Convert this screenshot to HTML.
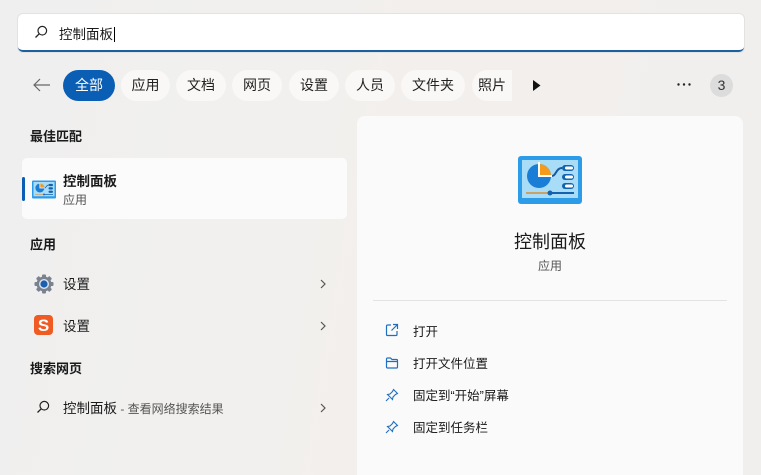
<!DOCTYPE html>
<html><head><meta charset="utf-8"><style>
*{margin:0;padding:0;box-sizing:border-box}
html,body{width:761px;height:475px;overflow:hidden}
body{background:linear-gradient(100deg,#efefef 0%,#f2f0ee 40%,#f3efec 50%,#f0efee 100%);font-family:"Liberation Sans","Noto Sans CJK SC",sans-serif;color:#1a1a1a;position:relative}
.a{position:absolute}
.search{left:18px;top:14px;width:726px;height:38px;background:#fff;border-radius:5px;border-bottom:2px solid #1e5fa0;box-shadow:0 0 0 1px #e2e2e2}
.chip{position:absolute;top:70px;height:31px;border-radius:16px;background:#f9f8f7;font-size:14px;line-height:31px;text-align:center;color:#222}
.chip.on{background:#0a5fb4;color:#fff}
.h{font-size:13px;font-weight:bold;color:#1a1a1a}
.t{font-size:13.5px;color:#1a1a1a}
.act{font-size:12.5px;color:#1a1a1a}
</style></head><body>
<div class="a search"></div>
<svg class="a" style="left:34px;top:25px" width="14" height="14" viewBox="0 0 14 14"><circle cx="8.3" cy="5.7" r="4.3" fill="none" stroke="#222" stroke-width="1.2"/><path d="M5.2 8.8L1.5 12.5" stroke="#222" stroke-width="1.3"/></svg>
<div class="a" style="left:59px;top:23px;font-size:13.5px">控制面板<span style="border-left:1px solid #000;margin-left:1px"></span></div>

<svg class="a" style="left:32px;top:77px" width="20" height="16" viewBox="0 0 20 16"><path d="M18 8H2M8 2L2 8l6 6" fill="none" stroke="#666" stroke-width="1.2"/></svg>
<div class="chip on" style="left:63px;width:52px">全部</div>
<div class="chip" style="left:121px;width:49px">应用</div>
<div class="chip" style="left:176px;width:50px">文档</div>
<div class="chip" style="left:232px;width:50px">网页</div>
<div class="chip" style="left:289px;width:50px">设置</div>
<div class="chip" style="left:345px;width:50px">人员</div>
<div class="chip" style="left:401px;width:64px">文件夹</div>
<div class="chip" style="left:472px;width:40px;border-radius:16px 0 0 16px">照片</div>
<svg class="a" style="left:532px;top:80px" width="9" height="11"><path d="M1 0L8.5 5.5L1 11Z" fill="#111"/></svg>
<svg class="a" style="left:677px;top:83px" width="14" height="3"><circle cx="1.5" cy="1.5" r="1.2" fill="#222"/><circle cx="7" cy="1.5" r="1.2" fill="#222"/><circle cx="12.5" cy="1.5" r="1.2" fill="#222"/></svg>
<div class="a" style="left:710px;top:74px;width:23px;height:23px;border-radius:50%;background:#dcdcdc;font-size:14px;text-align:center;line-height:23px;color:#333">3</div>

<div class="a h" style="left:30px;top:126px">最佳匹配</div>
<div class="a" style="left:22px;top:158px;width:325px;height:61px;background:#fbfbfb;border-radius:5px"></div>
<div class="a" style="left:22px;top:177px;width:3px;height:24px;background:#0a5fb4;border-radius:2px"></div>
<svg class="a" style="left:32px;top:180px" width="24" height="19" viewBox="0 0 64 48"><rect x="0" y="0" width="64" height="48" rx="3" fill="#2c9be8"/><rect x="4" y="4" width="56" height="38" fill="#a9dcf6"/><circle cx="21" cy="20" r="12" fill="#1a7ed6"/><path d="M21 8A12 12 0 0 1 33 20H21Z" fill="#f49b1c"/><path d="M21 6v14h14" fill="none" stroke="#fff" stroke-width="2"/><path d="M34 20c4 0 4-8 10-8" stroke="#145a9e" stroke-width="2" fill="none"/><rect x="44" y="9" width="12" height="6" rx="3" fill="#1262b0"/><rect x="44" y="18" width="12" height="6" rx="3" fill="#1262b0"/><rect x="44" y="27" width="12" height="6" rx="3" fill="#1262b0"/><path d="M8 37h22" stroke="#c9a26a" stroke-width="2"/><path d="M34 37h22" stroke="#1262b0" stroke-width="2"/><circle cx="32" cy="37" r="2.5" fill="#1262b0"/></svg>
<div class="a" style="left:63px;top:170px;font-size:13.5px;font-weight:bold">控制面板</div>
<div class="a" style="left:63px;top:191px;font-size:12px;color:#555">应用</div>

<div class="a h" style="left:30px;top:234px">应用</div>
<svg class="a" style="left:34px;top:274px" width="20" height="20" viewBox="0 0 20 20"><g fill="#7a8290"><circle cx="10" cy="10" r="7.5"/><rect x="8" y="0.5" width="4" height="19" rx="1"/><rect x="0.5" y="8" width="19" height="4" rx="1"/><rect x="8" y="0.5" width="4" height="19" rx="1" transform="rotate(45 10 10)"/><rect x="8" y="0.5" width="4" height="19" rx="1" transform="rotate(-45 10 10)"/></g><circle cx="10" cy="10" r="5" fill="#dfe4ea"/><circle cx="10" cy="10" r="3.6" fill="#1a5fb0"/></svg>
<div class="a t" style="left:63px;top:273px">设置</div>
<svg class="a" style="left:320px;top:279px" width="6" height="10"><path d="M1 1l4 4-4 4" fill="none" stroke="#555" stroke-width="1.2"/></svg>
<svg class="a" style="left:34px;top:315px" width="19" height="20" viewBox="0 0 19 20"><rect x="0" y="0" width="19" height="20" rx="4" fill="#f05a23"/><text x="9.5" y="16" font-size="17" font-weight="bold" fill="#fff" text-anchor="middle" font-family="Liberation Sans">S</text></svg>
<div class="a t" style="left:63px;top:315px">设置</div>
<svg class="a" style="left:320px;top:321px" width="6" height="10"><path d="M1 1l4 4-4 4" fill="none" stroke="#555" stroke-width="1.2"/></svg>

<div class="a h" style="left:30px;top:358px">搜索网页</div>
<svg class="a" style="left:36px;top:400px" width="14" height="14" viewBox="0 0 14 14"><circle cx="8.3" cy="5.7" r="4.3" fill="none" stroke="#222" stroke-width="1.2"/><path d="M5.2 8.8L1.5 12.5" stroke="#222" stroke-width="1.3"/></svg>
<div class="a t" style="left:63px;top:397px">控制面板<span style="font-size:12px;color:#555"> - 查看网络搜索结果</span></div>
<svg class="a" style="left:320px;top:403px" width="6" height="10"><path d="M1 1l4 4-4 4" fill="none" stroke="#555" stroke-width="1.2"/></svg>

<div class="a" style="left:357px;top:116px;width:386px;height:370px;background:#fafafa;border-radius:8px"></div>
<svg class="a" style="left:518px;top:156px" width="64" height="48" viewBox="0 0 64 48"><rect x="0" y="0" width="64" height="48" rx="3" fill="#2c9be8"/><rect x="4" y="4" width="56" height="38" fill="#a9dcf6"/><circle cx="21" cy="20" r="12" fill="#1a7ed6"/><path d="M21 8A12 12 0 0 1 33 20H21Z" fill="#f49b1c"/><path d="M21 6v14h14" fill="none" stroke="#fff" stroke-width="2"/><path d="M34 20c4 0 4-8 10-8" stroke="#145a9e" stroke-width="2" fill="none"/><rect x="44" y="9" width="12" height="6" rx="3" fill="#1262b0"/><rect x="47" y="10.5" width="8" height="3" rx="1.5" fill="#fff"/><rect x="44" y="18" width="12" height="6" rx="3" fill="#1262b0"/><rect x="47" y="19.5" width="8" height="3" rx="1.5" fill="#fff"/><rect x="44" y="27" width="12" height="6" rx="3" fill="#1262b0"/><rect x="47" y="28.5" width="8" height="3" rx="1.5" fill="#fff"/><path d="M8 37h22" stroke="#c9a26a" stroke-width="2"/><path d="M34 37h22" stroke="#1262b0" stroke-width="2"/><circle cx="32" cy="37" r="2.5" fill="#1262b0"/></svg>
<div class="a" style="left:357px;width:386px;top:228px;text-align:center;font-size:18px">控制面板</div>
<div class="a" style="left:357px;width:386px;top:257px;text-align:center;font-size:12px;color:#555">应用</div>
<div class="a" style="left:373px;top:300px;width:354px;height:1px;background:#e3e3e3"></div>

<svg class="a" style="left:385px;top:323px" width="14" height="14" viewBox="0 0 14 14"><path d="M6 2H2.5A1 1 0 0 0 1.5 3v8.5a1 1 0 0 0 1 1H11a1 1 0 0 0 1-1V8M8 1.5h4.5V6M12.5 1.5L6.5 7.5" fill="none" stroke="#1e6fc0" stroke-width="1.2"/></svg>
<div class="a act" style="left:413px;top:321px">打开</div>
<svg class="a" style="left:385px;top:356px" width="14" height="14" viewBox="0 0 14 14"><path d="M1.5 3a1 1 0 0 1 1-1h3l1.5 1.5h4.5a1 1 0 0 1 1 1V11a1 1 0 0 1-1 1h-9a1 1 0 0 1-1-1ZM1.5 5.5h11" fill="none" stroke="#1e6fc0" stroke-width="1.2"/></svg>
<div class="a act" style="left:413px;top:353px">打开文件位置</div>
<svg class="a" style="left:385px;top:388px" width="14" height="14" viewBox="0 0 14 14"><path d="M8.5 1.5l4 4-2 1-2.5 2.5-.5 2.5-5-5 2.5-.5L7.5 3.5ZM4 10l-3 3" fill="none" stroke="#1e6fc0" stroke-width="1.1"/></svg>
<div class="a act" style="left:413px;top:385px">固定到“开始”屏幕</div>
<svg class="a" style="left:385px;top:420px" width="14" height="14" viewBox="0 0 14 14"><path d="M8.5 1.5l4 4-2 1-2.5 2.5-.5 2.5-5-5 2.5-.5L7.5 3.5ZM4 10l-3 3" fill="none" stroke="#1e6fc0" stroke-width="1.1"/></svg>
<div class="a act" style="left:413px;top:417px">固定到任务栏</div>
</body></html>
